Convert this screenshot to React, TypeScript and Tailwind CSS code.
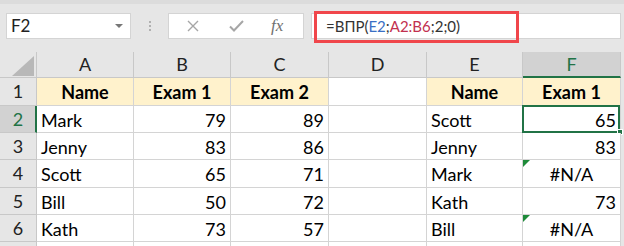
import React from "react";

const cols = [97, 97, 98, 98, 96, 98];
const letters = ["A", "B", "C", "D", "E", "F"];
const rowHeights = [28, 27, 27, 28, 27, 27];

type Cell = { v: string; align?: "l" | "r" | "c"; bold?: boolean; bg?: string; err?: boolean };

const rows: Cell[][] = [
  [
    { v: "Name", align: "c", bold: true, bg: "y" },
    { v: "Exam 1", align: "c", bold: true, bg: "y" },
    { v: "Exam 2", align: "c", bold: true, bg: "y" },
    { v: "" },
    { v: "Name", align: "c", bold: true, bg: "y" },
    { v: "Exam 1", align: "c", bold: true, bg: "y" },
  ],
  [{ v: "Mark" }, { v: "79", align: "r" }, { v: "89", align: "r" }, { v: "" }, { v: "Scott" }, { v: "65", align: "r" }],
  [{ v: "Jenny" }, { v: "83", align: "r" }, { v: "86", align: "r" }, { v: "" }, { v: "Jenny" }, { v: "83", align: "r" }],
  [{ v: "Scott" }, { v: "65", align: "r" }, { v: "71", align: "r" }, { v: "" }, { v: "Mark" }, { v: "#N/A", align: "c", err: true }],
  [{ v: "Bill" }, { v: "50", align: "r" }, { v: "72", align: "r" }, { v: "" }, { v: "Kath" }, { v: "73", align: "r" }],
  [{ v: "Kath" }, { v: "73", align: "r" }, { v: "57", align: "r" }, { v: "" }, { v: "Bill" }, { v: "#N/A", align: "c", err: true }],
];

const Toolbar = () => (
  <div className="relative h-[48px] bg-[#e6e6e6]">
    <div className="h-[4px] bg-[#dcdcdc]" />
    <div className="flex items-center pt-[9px]">
      {/* name box */}
      <div className="ml-[6px] flex h-[26px] w-[125px] items-center justify-between border border-[#d4d4d4] bg-white pl-[4px] pr-[7px] text-[17px] text-[#222]">
        <span>F2</span>
        <svg width="8" height="5" viewBox="0 0 8 5">
          <path d="M0 0h8L4 4z" fill="#777" />
        </svg>
      </div>
      {/* grip dots */}
      <div className="ml-[18px] flex flex-col gap-[2px]">
        <div className="h-[2px] w-[2px] bg-[#b0b0b0]" />
        <div className="h-[2px] w-[2px] bg-[#b0b0b0]" />
        <div className="h-[2px] w-[2px] bg-[#b0b0b0]" />
      </div>
      {/* formula buttons */}
      <div className="ml-[17px] flex h-[26px] w-[136px] items-center border border-[#d4d4d4] bg-white">
        <svg className="ml-[18px]" width="12" height="12" viewBox="0 0 12 12">
          <path d="M1 1l10 10M11 1L1 11" stroke="#a6a6a6" strokeWidth="1.4" />
        </svg>
        <svg className="ml-[30px]" width="15" height="12" viewBox="0 0 15 12">
          <path d="M1 6.5l4 4L14 1" stroke="#a6a6a6" strokeWidth="2" fill="none" />
        </svg>
        <span className="ml-[27px] font-['Liberation_Serif'] text-[17px] italic text-[#6f6f6f]">fx</span>
      </div>
      {/* formula input */}
      <div className="ml-[7px] flex h-[26px] w-[310px] items-center border border-[#d4d4d4] bg-white pl-[14px] text-[15px] text-[#333]">
        <span>=ВПР(</span>
        <span className="text-[#3a6fc4]">E2</span>
        <span>;</span>
        <span className="text-[#c2304f]">A2:B6</span>
        <span>;2;0)</span>
      </div>
    </div>
    {/* highlight annotation */}
    <div className="absolute left-[314px] top-[11px] h-[32px] w-[205px] border-[3px] border-[#f0464b]" />
  </div>
);

const Corner = () => (
  <div className="relative h-[26px] border-r border-b border-[#c8c8c8] bg-[#e6e6e6]">
    <svg className="absolute right-[2px] bottom-[1px]" width="22" height="20" viewBox="0 0 22 20">
      <path d="M22 0V20H0z" fill="#b8b8b8" />
    </svg>
  </div>
);

export default function App() {
  return (
    <div className="h-[246px] w-[624px] overflow-hidden bg-[#e6e6e6] font-['Lato',sans-serif] text-[18px] text-black">
      <Toolbar />
      <div className="mt-[4px] flex">
        {/* row headers */}
        <div className="flex w-[37px] flex-col">
          <Corner />
          {rowHeights.map((h, i) => (
            <div
              key={i}
              style={{ height: h }}
              className={
                i === 1
                  ? "flex items-center justify-center border-b border-r-2 border-b-[#c8c8c8] border-r-[#217346] bg-[#d2d2d2] pl-[1px] text-[#217346]"
                  : "flex items-center justify-center border-r border-b border-[#c8c8c8] bg-[#e6e6e6] text-[#222]"
              }
            >
              {i + 1}
            </div>
          ))}
          <div className="h-[10px] border-r border-[#c8c8c8] bg-[#e6e6e6]" />
        </div>
        {/* columns */}
        {cols.map((w, c) => (
          <div key={c} style={{ width: w }} className="flex flex-col">
            <div
              className={
                c === 5
                  ? "flex h-[26px] items-center justify-center border-r border-b-2 border-r-[#c8c8c8] border-b-[#217346] bg-[#d2d2d2] text-[#217346]"
                  : "flex h-[26px] items-center justify-center border-r border-b border-[#c8c8c8] bg-[#e6e6e6] text-[#222]"
              }
            >
              {letters[c]}
            </div>
            {rows.map((r, i) => {
              const cell = r[c];
              const isSel = c === 5 && i === 1;
              return (
                <div
                  key={i}
                  style={{ height: rowHeights[i] }}
                  className={[
                    "relative flex items-center border-r border-b border-[#d4d4d4] px-[4px] pt-[2px]",
                    cell.bg === "y" ? "bg-[#fff2cc]" : "bg-white",
                    cell.align === "r" ? "justify-end" : cell.align === "c" ? "justify-center" : "justify-start",
                    cell.bold ? "font-bold" : "",
                  ].join(" ")}
                >
                  {cell.err && (
                    <div className="absolute left-0 top-0 h-0 w-0 border-t-[7px] border-r-[7px] border-t-[#1e8b3a] border-r-transparent" />
                  )}
                  {isSel && (
                    <>
                      <div className="absolute -left-[1px] -top-[1px] h-[calc(100%+2px)] w-[calc(100%+1px)] border-2 border-[#217346]" />
                      <div className="absolute -bottom-[3px] -right-[3px] h-[6px] w-[6px] border border-white bg-[#217346]" />
                    </>
                  )}
                  <span className="relative">{cell.v}</span>
                </div>
              );
            })}
            <div className="h-[10px] border-r border-[#d4d4d4] bg-white" />
          </div>
        ))}
        <div className="flex-1 bg-[#e6e6e6]" />
      </div>
    </div>
  );
}
